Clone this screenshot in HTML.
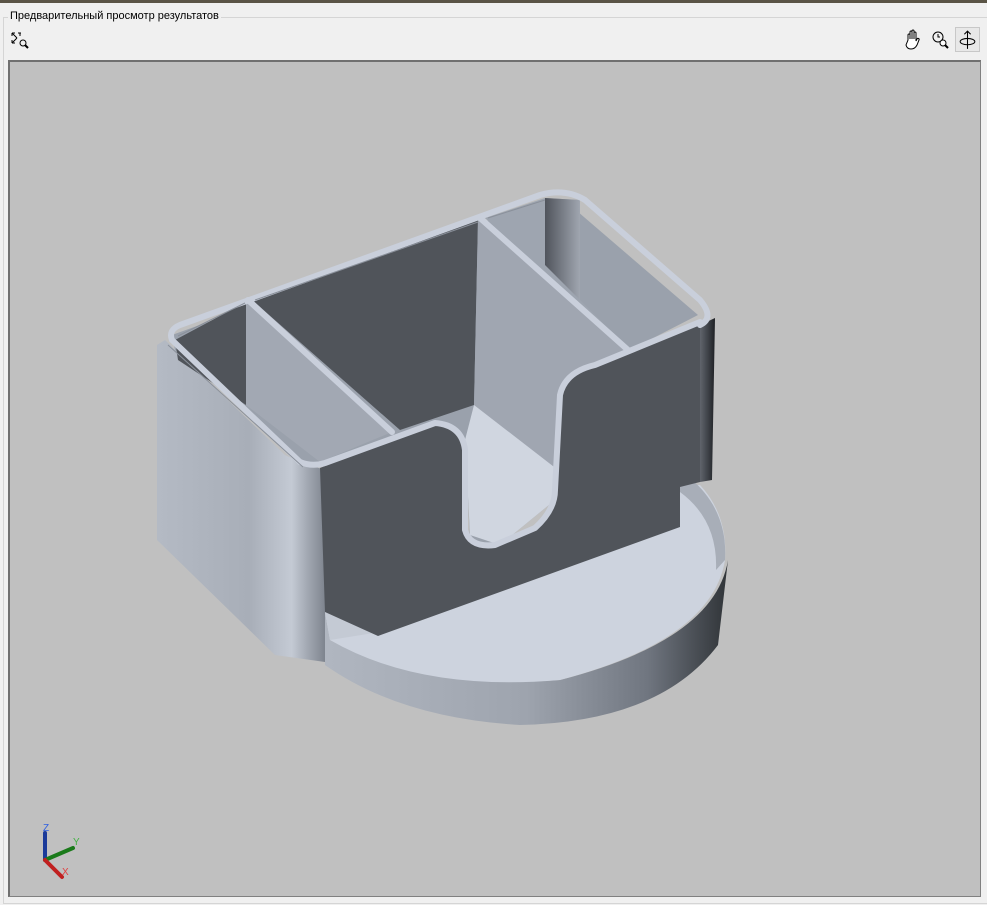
<!DOCTYPE html>
<html><head><meta charset="utf-8"><style>
html,body{margin:0;padding:0;width:987px;height:905px;overflow:hidden;background:#f0f0f0;font-family:"Liberation Sans",sans-serif}
.top{position:absolute;left:0;top:0;width:987px;height:3px;background:#5a5446}
.grp{position:absolute;left:3px;top:17px;width:990px;height:885px;border:1px solid #d5d5d5;border-right:none}
.title{position:absolute;left:8px;top:10px;font-size:11px;color:#000;background:#f0f0f0;padding:0 2px}
.view{position:absolute;left:8px;top:60px;width:970px;height:834px;background:#c0c0c0;border:1px solid #808080;border-top:2px solid #707070;border-left:2px solid #707070}
.btn{position:absolute;top:28px;width:22px;height:22px}
.sel{border:1px solid #c8c8c8;background:#e8e8e8;box-sizing:border-box}
</style></head><body>
<div class="top"></div>
<div class="grp"></div>
<div class="title">Предварительный просмотр результатов</div>
<svg class="btn" style="left:9px;top:30px" viewBox="0 0 22 22"><g stroke="#000" fill="none" stroke-width="1"><path d="M3 3l5 5M3 3h3M3 3v3M3 13l5-5M3 13h3M3 13v-3M9 3h3M11 3v3"/><circle cx="14" cy="13" r="3"/><path d="M16 15l3 3" stroke-width="2"/></g></svg>
<svg class="btn" style="left:902px" viewBox="0 0 22 22"><path d="M6 12V7a1 1 0 012 0v4V4a1 1 0 012 0v7V3a1 1 0 012 0v8V5a1 1 0 012 0v8l1-2a1 1 0 012 1l-2 5q-2 4-6 4q-4 0-5-4z" fill="#fff" stroke="#000"/></svg>
<svg class="btn" style="left:929px" viewBox="0 0 22 22"><g stroke="#000" fill="none"><circle cx="9" cy="9" r="5"/><path d="M9 6v3h2"/><circle cx="14" cy="15" r="3" fill="#fff"/><path d="M16 17l3 3" stroke-width="2"/></g></svg>
<div class="btn sel" style="left:955px;width:25px;height:25px;top:27px"><svg width="23" height="23" viewBox="0 0 22 22"><g stroke="#000" fill="none"><path d="M11 3v17M8 6l3-3 3 3"/><ellipse cx="11" cy="13" rx="7" ry="3"/></g></svg></div>
<div class="view">
<svg width="970" height="834" viewBox="10 62 970 834">
<defs>
<linearGradient id="lw" x1="0" x2="1"><stop offset="0" stop-color="#b4bac4"/><stop offset="0.55" stop-color="#a8aeb8"/><stop offset="0.8" stop-color="#c4cad4"/><stop offset="1" stop-color="#7e848e"/></linearGradient>
<linearGradient id="bs" x1="0" x2="1"><stop offset="0" stop-color="#b0b6c0"/><stop offset="0.5" stop-color="#9ea4ae"/><stop offset="0.8" stop-color="#707680"/><stop offset="1" stop-color="#303438"/></linearGradient>
<linearGradient id="rs" x1="0" x2="1"><stop offset="0" stop-color="#60646c"/><stop offset="0.5" stop-color="#40444a"/><stop offset="1" stop-color="#1e2024"/></linearGradient>
<linearGradient id="rc" x1="0" x2="1"><stop offset="0" stop-color="#50545c"/><stop offset="1" stop-color="#a0a6b0"/></linearGradient>
</defs>
<path d="M325,612 L325,665 Q400,718 520,725 Q660,722 718,645 L728,560 Q715,640 560,680 Q420,690 330,640 Z" fill="url(#bs)"/>
<path d="M325,612 L680,485 L700,485 Q728,515 725,560 Q712,640 560,680 Q420,692 330,640 Z" fill="#cdd3de"/>
<path d="M680,480 L690,478 Q728,510 725,560 L716,570 Q718,520 680,492 Z" fill="#a8aeb8"/>
<path d="M325,612 L380,632 L330,640 Z" fill="#c4cad4"/>
<path d="M157,345 L157,540 L275,655 L325,662 L325,470 L300,462 L285,455 L165,340 Z" fill="url(#lw)"/>
<path d="M700,325 L715,318 L712,480 L700,482 Z" fill="url(#rs)"/>
<path d="M172,335 L545,200 L570,205 L698,315 L630,350 L590,365 L560,395 L555,500 L500,545 L470,540 L465,440 L435,423 L320,465 L300,460 L175,350 Z" fill="#9aa1ac"/>
<path d="M175,340 L246,302 L246,405 L178,360 Z" fill="#50545a"/>
<path d="M246,302 L392,432 L320,462 L246,405 Z" fill="#a2a8b3"/>
<path d="M252,300 L478,220 L474,405 L400,430 Z" fill="#50545a"/>
<path d="M478,220 L628,350 L590,364 L565,385 L558,490 L474,405 Z" fill="#a0a6b1"/>
<path d="M474,405 L558,470 L555,500 L500,545 L470,535 L465,440 Z" fill="#d0d6e0"/>
<path d="M485,218 L545,198 L580,200 L580,300 L628,348 Z" fill="#9ea5b0"/>
<path d="M545,198 L580,200 L580,300 L545,265 Z" fill="url(#rc)"/>
<path d="M320,468 L435,423 Q462,425 465,450 L465,530 Q470,548 495,545 L535,528 Q555,510 555,490 L560,395 Q565,372 595,365 L700,322 L700,482 L680,487 L680,527 L378,636 L325,612 Z" fill="#50545a"/>
<g fill="none" stroke="#c9cfdb" stroke-width="6" stroke-linejoin="round" stroke-linecap="round">
<path d="M300,462 L172,340 Q168,330 180,325 L540,195 Q565,188 585,200 L700,300 Q715,318 700,325"/>
<path d="M300,462 Q312,467 325,463 L435,423 Q462,425 465,450 L465,530 Q470,548 495,545 L535,528 Q555,510 555,490 L560,395 Q565,372 595,365 L700,322"/>
<path d="M248,300 L392,432"/>
<path d="M480,218 L628,350"/>
</g>
<g fill="none" stroke="#8a909a" stroke-width="1">
<path d="M303,467 L168,345"/>
<path d="M178,336 L245,303 M255,300 L478,222 M488,218 L545,200"/>
</g>
<g stroke-width="4" stroke-linecap="round">
<line x1="45" y1="860" x2="45" y2="833" stroke="#1a3a9a"/>
<line x1="45" y1="860" x2="73" y2="848" stroke="#1a7a1a"/>
<line x1="45" y1="860" x2="62" y2="877" stroke="#c02020"/>
</g>
<text x="43" y="831" font-size="10" fill="#3060e0" font-family="Liberation Sans">Z</text>
<text x="73" y="845" font-size="10" fill="#40b040" font-family="Liberation Sans">Y</text>
<text x="62" y="875" font-size="10" fill="#e04040" font-family="Liberation Sans">X</text>
</svg>
</div>
</body></html>
